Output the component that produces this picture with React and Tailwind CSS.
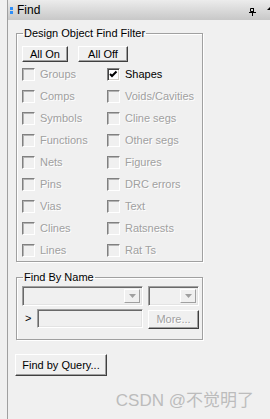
import React from "react";

const leftItems = ["Groups", "Comps", "Symbols", "Functions", "Nets", "Pins", "Vias", "Clines", "Lines"];
const rightItems = ["Shapes", "Voids/Cavities", "Cline segs", "Other segs", "Figures", "DRC errors", "Text", "Ratsnests", "Rat Ts"];

function CheckBox({ checked, disabled }) {
  return (
    <span
      className={
        "w-[13px] h-[13px] shrink-0 border border-t-[#808080] border-l-[#808080] border-r-white border-b-white flex items-center justify-center " +
        (disabled
          ? "bg-[#f0f0f0] shadow-[inset_1px_1px_0_#b4b4b4]"
          : "bg-white shadow-[inset_1px_1px_0_#404040,inset_-1px_-1px_0_#d4d0c8]")
      }
    >
      {checked && (
        <svg width="11" height="11" viewBox="0 0 11 11">
          <path d="M2 5 L4 7 L8.5 2.5" stroke="#000" strokeWidth="2" fill="none" />
        </svg>
      )}
    </span>
  );
}

function Item({ label, checked, disabled }) {
  return (
    <div className="h-[22px] flex items-center">
      <CheckBox checked={checked} disabled={disabled} />
      <span
        className={
          "ml-[5px] leading-[13px] " +
          (disabled ? "text-[#a0a0a0] [text-shadow:1px_1px_0_#fff]" : "text-black")
        }
      >
        {label}
      </span>
    </div>
  );
}

function Button({ children, className = "", disabled }) {
  return (
    <div
      className={
        "flex items-center justify-center bg-[#f0f0f0] border border-t-white border-l-white border-r-[#404040] border-b-[#404040] shadow-[inset_-1px_-1px_0_#a0a0a0] " +
        (disabled ? "text-[#a0a0a0] [text-shadow:1px_1px_0_#fff] " : "text-black ") +
        className
      }
    >
      {children}
    </div>
  );
}

function Combo({ className = "" }) {
  return (
    <div
      className={
        "flex justify-end bg-[#f0f0f0] border border-t-[#a0a0a0] border-l-[#a0a0a0] border-r-white border-b-white shadow-[inset_1px_1px_0_#696969,inset_-1px_-1px_0_#e3e3e3] p-[2px] " +
        className
      }
    >
      <div className="w-[16px] h-full bg-[#f0f0f0] border border-t-white border-l-white border-r-[#a0a0a0] border-b-[#a0a0a0] flex items-center justify-center">
        <svg width="7" height="4" viewBox="0 0 7 4">
          <path d="M0 0 H7 L3.5 4 Z" fill="#a0a0a0" />
        </svg>
      </div>
    </div>
  );
}

export default function App() {
  return (
    <div className="w-[270px] h-[419px] bg-[#f0f0f0] flex relative overflow-hidden font-['Liberation_Sans',Arial,sans-serif] text-[11px]">
      <div className="w-[7px] shrink-0" />
      <div className="w-px shrink-0 bg-[#a0a0a0]" />
      <div className="flex-1 flex flex-col">
        {/* title bar */}
        <div className="h-[20px] bg-gradient-to-b from-[#ececec] to-[#c8c8c8] flex items-center pl-[2px]">
          <div className="flex flex-col gap-[1px] w-[3px]">
            <span className="w-[3px] h-[3px] bg-[#2e8ef8]" />
            <span className="w-[3px] h-[3px] bg-[#2e8ef8]" />
          </div>
          <span className="ml-[4px] text-[12px] text-black">Find</span>
          <div className="flex-1" />
          <svg width="7" height="8" viewBox="0 0 7 8" className="mt-[4px]">
            <path d="M1.5 0.5 H4.5 V3.5 H1.5 Z" stroke="#000" fill="none" />
            <rect x="4" y="0" width="1" height="4" fill="#000" />
            <rect x="0" y="4" width="7" height="1" fill="#000" />
            <rect x="3" y="5" width="1" height="3" fill="#000" />
          </svg>
          <svg width="10" height="6" viewBox="0 0 10 6" className="ml-[10px] -mr-[6px] mt-[-4px]">
            <path d="M1 5 L5 1 L9 5 Z" fill="#000" />
          </svg>
        </div>

        {/* Design Object Find Filter */}
        <fieldset className="ml-[8px] mt-[7px] w-[187px] border border-[#a0a0a0] shadow-[inset_1px_1px_0_#fff,1px_1px_0_#fff] p-0">
          <legend className="ml-[6px] px-[1px] leading-[13px] text-black">Design Object Find Filter</legend>
          <div className="pl-[5px]">
            <div className="flex mt-[6px]">
              <Button className="w-[46px] h-[16px]">All On</Button>
              <Button className="w-[50px] h-[16px] ml-[10px]">All Off</Button>
            </div>
            <div className="grid grid-cols-[85px_1fr] mt-[1px]">
              {leftItems.map((l, i) => (
                <React.Fragment key={l}>
                  <Item label={l} disabled />
                  <Item label={rightItems[i]} checked={i === 0} disabled={i !== 0} />
                </React.Fragment>
              ))}
            </div>
          </div>
        </fieldset>

        {/* Find By Name */}
        <fieldset className="ml-[8px] mt-[9px] w-[187px] border border-[#a0a0a0] shadow-[inset_1px_1px_0_#fff,1px_1px_0_#fff] p-0">
          <legend className="ml-[6px] px-[1px] leading-[13px] text-black">Find By Name</legend>
          <div className="pl-[5px] pb-[10px]">
            <div className="flex mt-[2px] h-[20px]">
              <Combo className="w-[121px]" />
              <Combo className="w-[51px] ml-[5px]" />
            </div>
            <div className="flex items-start mt-[3px]">
              <span className="w-[15px] pl-[3px] leading-[19px] text-black">&gt;</span>
              <div className="w-[106px] h-[19px] bg-[#f0f0f0] border border-t-[#a0a0a0] border-l-[#a0a0a0] border-r-white border-b-white shadow-[inset_1px_1px_0_#696969,inset_-1px_-1px_0_#e3e3e3]" />
              <Button disabled className="w-[51px] h-[19px] ml-[5px] mt-[1px]">More...</Button>
            </div>
          </div>
        </fieldset>

        <Button className="w-[92px] h-[22px] ml-[7px] mt-[14px]">Find by Query...</Button>
      </div>

      <div className="absolute right-[16px] top-[388px] text-[17px] text-[#bcbcbc] font-['Liberation_Sans','Noto_Sans_CJK_SC',sans-serif]">
        CSDN @不觉明了
      </div>
    </div>
  );
}
